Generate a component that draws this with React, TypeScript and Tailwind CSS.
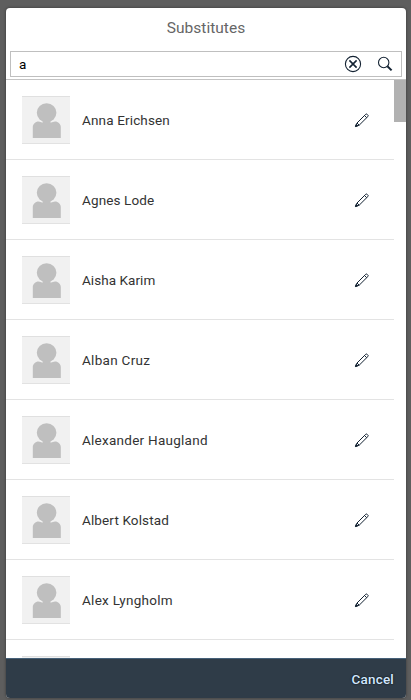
const people = [
  { name: 'Anna Erichsen', tracking: 'tracking-[0.15px]' },
  { name: 'Agnes Lode', tracking: 'tracking-[0.13px]' },
  { name: 'Aisha Karim', tracking: 'tracking-[0.06px]' },
  { name: 'Alban Cruz', tracking: 'tracking-[0.3px]' },
  { name: 'Alexander Haugland', tracking: 'tracking-[0.26px]' },
  { name: 'Albert Kolstad', tracking: 'tracking-[0.13px]' },
  { name: 'Alex Lyngholm', tracking: 'tracking-[0.27px]' },
  { name: '', tracking: '' },
];

function Avatar() {
  return (
    <div className="h-12 w-12 shrink-0 border-y border-b-[#e2e2e2] border-t-[#e0e0e0] bg-[#f1f1f1]">
      <svg width="48" height="46" viewBox="0 1 48 46" fill="#bfbfbf">
        <ellipse cx="24.6" cy="16.8" rx="9.8" ry="9.5" />
        <path d="M20.5 24h8.2l-.4 2.3c1.2 1 2.8-.7 4.8-.7 3 0 5.7 2.6 5.7 5.4v11H10.8V31c0-2.8 2.7-5.4 5.7-5.4 2 0 3.2 1.7 4.4.7z" />
      </svg>
    </div>
  );
}

function Pencil() {
  return (
    <svg width="16" height="16" viewBox="0 0 16 16" fill="none" stroke="#142333" strokeWidth="1" strokeLinejoin="round">
      <path d="M1.6 14.4 3 11 11.7 2.3Q12.4 1.6 13.1 2.3L13.9 3.1Q14.6 3.8 13.9 4.5L5.2 13.2Z" />
      <path d="m10.5 3.5 2.2 2.2M3 11l2.2 2.2" />
      <path d="M1.4 14.6 2.3 12.2 3.9 13.8Z" fill="#142333" />
    </svg>
  );
}

export default function App() {
  return (
    <div className="flex h-[700px] w-[411px] bg-[#5e5e5e] pb-[2px] pl-[6px] pr-[5px] pt-2 font-[Roboto,'Liberation_Sans',sans-serif]">
      <div className="flex w-full flex-col overflow-hidden rounded-[4px] bg-white shadow-[0_0_3px_rgba(0,0,0,0.45)]">
        <header className="flex h-[43px] shrink-0 items-center justify-center pb-px text-[15.5px] tracking-[0.02px] text-[#666666]">
          Substitutes
        </header>
        <div className="h-[29px] shrink-0 border-b border-[#c4c4c4] px-1">
          <div className="flex h-[26px] items-center border border-[#bfbfbf] pl-2">
            <span className="flex-1 pt-px text-[13.5px] text-black">a</span>
            <svg className="mr-[15px]" width="18" height="18" viewBox="0 0 18 18" fill="none" stroke="#142333">
              <circle cx="9" cy="9" r="7.6" strokeWidth="1.1" />
              <path d="m5.4 5.4 7.2 7.2m0-7.2-7.2 7.2" strokeWidth="1.6" />
            </svg>
            <svg className="mr-2" width="16" height="16" viewBox="0 0 16 16" fill="none" stroke="#142333">
              <circle cx="6.7" cy="6.5" r="5.2" strokeWidth="1.1" />
              <path d="m10.4 10.2 4.2 4.2" strokeWidth="2" />
            </svg>
          </div>
        </div>
        <main className="flex h-[578px] shrink-0 overflow-hidden">
          <ul className="w-[388px]">
            {people.map((person, i) => (
              <li key={i} className="flex h-20 items-center border-b border-[#e3e3e3] pl-4 pr-6 pt-px">
                <Avatar />
                <span className={`ml-3 flex-1 whitespace-nowrap pt-px text-[13.5px] text-[#333333] ${person.tracking}`}>{person.name}</span>
                <Pencil />
              </li>
            ))}
          </ul>
          <div className="w-3">
            <div className="h-[42px] bg-[#b1b1b1]" />
          </div>
        </main>
        <footer className="flex h-10 items-center justify-end border-t border-[#456078] bg-[#2f3c48] pr-3 pt-px text-[13.5px] font-medium text-[#d1e8ff]">
          <button className="tracking-[0.2px] [text-shadow:0_0_2px_#000]">Cancel</button>
        </footer>
      </div>
    </div>
  );
}
